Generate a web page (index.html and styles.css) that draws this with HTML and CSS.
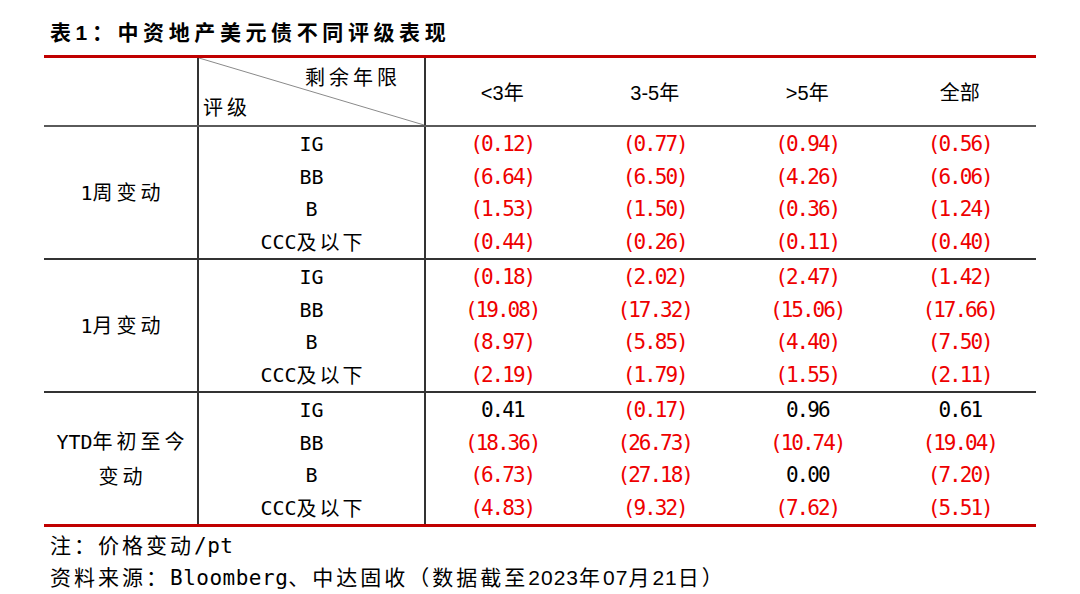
FILE: index.html
```html
<!DOCTYPE html>
<html lang="zh-CN">
<head>
<meta charset="utf-8">
<title>表1：中资地产美元债不同评级表现</title>
<link rel="stylesheet" href="styles.css">
</head>
<body>
<h1 class="title">表1：中资地产美元债不同评级表现</h1>
<div class="tbl">
  <div class="row head">
    <div class="cell"></div>
    <div class="cell col2 diag">
      <svg class="diag-line" width="100%" height="100%"><line x1="0" y1="0" x2="100%" y2="100%" stroke="#8a8a8a" stroke-width="1"/></svg>
      <span class="diag-top">剩余年限</span>
      <span class="diag-bottom">评级</span>
    </div>
    <div class="cell hd">&lt;3年</div>
    <div class="cell hd">3-5年</div>
    <div class="cell hd">&gt;5年</div>
    <div class="cell hd">全部</div>
  </div>

  <div class="row group">
    <div class="gname"><div><span class="lat">1</span>周变动</div></div>
    <div class="stack col2 labels">
      <div class="cell">IG</div><div class="cell">BB</div><div class="cell">B</div><div class="cell">CCC<span class="zh">及以下</span></div>
    </div>
    <div class="stack nums">
      <div class="cell neg">(0.12)</div><div class="cell neg">(6.64)</div><div class="cell neg">(1.53)</div><div class="cell neg">(0.44)</div>
    </div>
    <div class="stack nums">
      <div class="cell neg">(0.77)</div><div class="cell neg">(6.50)</div><div class="cell neg">(1.50)</div><div class="cell neg">(0.26)</div>
    </div>
    <div class="stack nums">
      <div class="cell neg">(0.94)</div><div class="cell neg">(4.26)</div><div class="cell neg">(0.36)</div><div class="cell neg">(0.11)</div>
    </div>
    <div class="stack nums">
      <div class="cell neg">(0.56)</div><div class="cell neg">(6.06)</div><div class="cell neg">(1.24)</div><div class="cell neg">(0.40)</div>
    </div>
  </div>

  <div class="row group">
    <div class="gname"><div><span class="lat">1</span>月变动</div></div>
    <div class="stack col2 labels">
      <div class="cell">IG</div><div class="cell">BB</div><div class="cell">B</div><div class="cell">CCC<span class="zh">及以下</span></div>
    </div>
    <div class="stack nums">
      <div class="cell neg">(0.18)</div><div class="cell neg">(19.08)</div><div class="cell neg">(8.97)</div><div class="cell neg">(2.19)</div>
    </div>
    <div class="stack nums">
      <div class="cell neg">(2.02)</div><div class="cell neg">(17.32)</div><div class="cell neg">(5.85)</div><div class="cell neg">(1.79)</div>
    </div>
    <div class="stack nums">
      <div class="cell neg">(2.47)</div><div class="cell neg">(15.06)</div><div class="cell neg">(4.40)</div><div class="cell neg">(1.55)</div>
    </div>
    <div class="stack nums">
      <div class="cell neg">(1.42)</div><div class="cell neg">(17.66)</div><div class="cell neg">(7.50)</div><div class="cell neg">(2.11)</div>
    </div>
  </div>

  <div class="row group">
    <div class="gname"><div><span class="lat">YTD</span>年初至今<br>变动</div></div>
    <div class="stack col2 labels">
      <div class="cell">IG</div><div class="cell">BB</div><div class="cell">B</div><div class="cell">CCC<span class="zh">及以下</span></div>
    </div>
    <div class="stack nums">
      <div class="cell">0.41</div><div class="cell neg">(18.36)</div><div class="cell neg">(6.73)</div><div class="cell neg">(4.83)</div>
    </div>
    <div class="stack nums">
      <div class="cell neg">(0.17)</div><div class="cell neg">(26.73)</div><div class="cell neg">(27.18)</div><div class="cell neg">(9.32)</div>
    </div>
    <div class="stack nums">
      <div class="cell">0.96</div><div class="cell neg">(10.74)</div><div class="cell">0.00</div><div class="cell neg">(7.62)</div>
    </div>
    <div class="stack nums">
      <div class="cell">0.61</div><div class="cell neg">(19.04)</div><div class="cell neg">(7.20)</div><div class="cell neg">(5.51)</div>
    </div>
  </div>
</div>
<div class="notes">
  <p class="note">注：价格变动<span class="mono">/pt</span></p>
  <p class="note">资料来源：<span class="mono">Bloomberg</span>、中达固收（数据截至<span class="date">2023</span>年<span class="date">07</span>月<span class="date">21</span>日）</p>
</div>
</body>
</html>
```
FILE: styles.css
```css
html, body {
  margin: 0;
  padding: 0;
  background: #ffffff;
}

body {
  width: 1080px;
  color: #000000;
  font-family: "Liberation Sans", "Noto Sans CJK SC", sans-serif;
}

.title {
  margin: 0;
  padding: 21px 0 0 50px;
  height: 24px;
  font-size: 21px;
  line-height: 24px;
  font-weight: 700;
  letter-spacing: 4.6px;
}

.tbl {
  margin: 10px 0 0 44px;
  width: 992px;
  border-top: 3px solid #c00000;
  border-bottom: 3px solid #c00000;
}

.row {
  display: grid;
  grid-template-columns: 153px 229px repeat(4, 1fr);
}

.head {
  height: 67px;
  border-bottom: 2px solid #5a5a5a;
}

.group {
  height: 131px;
  border-bottom: 2px solid #333333;
}

.group:last-child {
  border-bottom: 0;
}

.col2 {
  border-left: 2px solid #333333;
  border-right: 2px solid #333333;
}

.cell {
  display: flex;
  align-items: center;
  justify-content: center;
  line-height: 1;
}

.hd {
  font-size: 20px;
  padding-top: 2px;
}

.diag {
  position: relative;
  flex-direction: column;
  justify-content: space-between;
  align-items: stretch;
  padding: 9px 27px 8px 4px;
  font-family: "Noto Sans CJK SC", sans-serif;
  font-size: 20px;
  letter-spacing: 4px;
}

.diag-line {
  position: absolute;
  left: 0;
  top: 0;
}

.diag-top {
  align-self: flex-end;
  margin-right: -4px;
}

.diag-bottom {
  align-self: flex-start;
}

.stack {
  display: flex;
  flex-direction: column;
}

.stack .cell {
  flex: 1;
}

.gname {
  display: flex;
  align-items: center;
  justify-content: center;
  text-align: center;
  font-family: "Noto Sans CJK SC", sans-serif;
  font-size: 20px;
  line-height: 34px;
  letter-spacing: 4px;
}

.gname > div {
  margin-right: -4px;
}

.lat {
  font-family: "DejaVu Sans Mono", monospace;
  letter-spacing: 0;
}

.labels {
  font-family: "DejaVu Sans Mono", "Noto Sans CJK SC", monospace;
  font-size: 20px;
  letter-spacing: 0;
}

.zh {
  font-family: "Noto Sans CJK SC", sans-serif;
  letter-spacing: 3px;
  margin-right: -3px;
}

.labels .cell {
  padding-top: 1px;
}

.nums {
  font-family: "DejaVu Sans Mono", monospace;
  font-size: 21px;
  letter-spacing: -2px;
}

.nums .cell {
  padding-top: 2px;
}

.neg {
  color: #ee0000;
}

.notes {
  padding: 3px 0 0 50px;
}

.note {
  margin: 0;
  font-size: 21px;
  line-height: 32px;
  letter-spacing: 3px;
  white-space: nowrap;
}

.mono {
  font-family: "DejaVu Sans Mono", monospace;
  letter-spacing: 0.5px;
}

.date {
  letter-spacing: 1px;
}
```
